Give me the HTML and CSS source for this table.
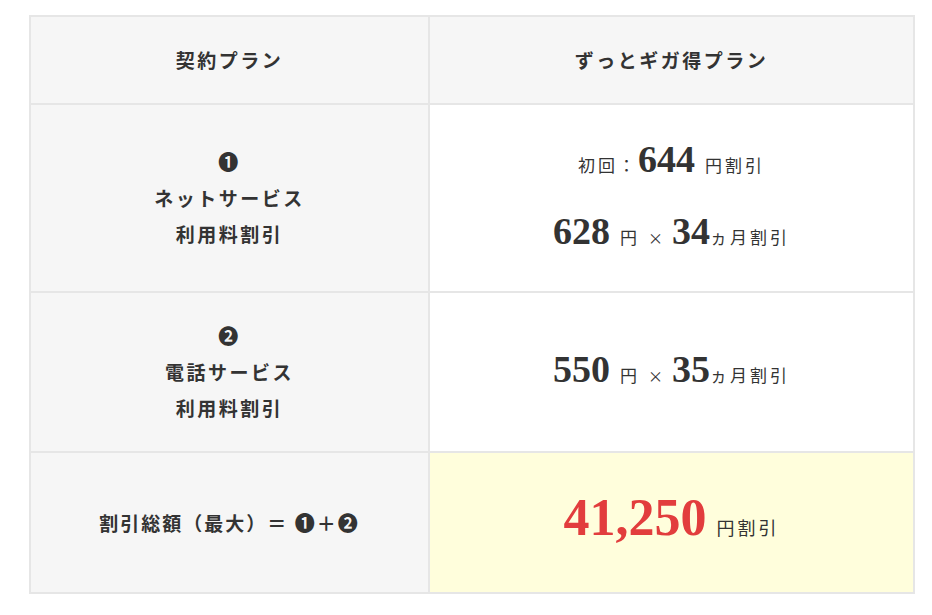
FILE: index.html
```html
<!DOCTYPE html>
<html lang="ja">
<head>
<meta charset="utf-8">
<title>ずっとギガ得プラン</title>
<link rel="stylesheet" href="styles.css">
</head>
<body>
<div class="wrap">
  <table class="plan">
    <tr class="row-head">
      <th class="label">契約プラン</th>
      <th class="label">ずっとギガ得プラン</th>
    </tr>
    <tr class="row-net">
      <th class="label">
        <div class="mark">❶</div>
        <div>ネットサービス</div>
        <div>利用料割引</div>
      </th>
      <td class="val">
        <p class="line"><span class="note">初回：</span><span class="num">644</span><span class="note gap">円割引</span></p>
        <p class="line"><span class="num">628</span><span class="note gap">円</span><span class="times">×</span><span class="num">34</span><span class="note">ヵ月割引</span></p>
      </td>
    </tr>
    <tr class="row-tel">
      <th class="label">
        <div class="mark">❷</div>
        <div>電話サービス</div>
        <div>利用料割引</div>
      </th>
      <td class="val">
        <p class="line"><span class="num">550</span><span class="note gap">円</span><span class="times">×</span><span class="num">35</span><span class="note">ヵ月割引</span></p>
      </td>
    </tr>
    <tr class="row-total">
      <th class="label total-label">割引総額（最大）＝ <span class="mark-inline">❶</span>＋<span class="mark-inline">❷</span></th>
      <td class="val total">
        <p class="line"><span class="num big">41,250</span><span class="note note-lg gap">円割引</span></p>
      </td>
    </tr>
  </table>
</div>
</body>
</html>
```

FILE: styles.css
```css
html, body {
  margin: 0;
  padding: 0;
  background: #ffffff;
}

body {
  font-family: "Noto Sans CJK JP", "Noto Sans", sans-serif;
  color: #333333;
}

.wrap {
  padding: 15px 17px 0 29px;
}

.plan {
  width: 886px;
  border-collapse: collapse;
  border: 2px solid #e6e6e6;
  table-layout: fixed;
}

.plan th,
.plan td {
  border: 2px solid #e6e6e6;
  padding: 0;
  text-align: center;
  vertical-align: middle;
}

.plan th:first-child {
  width: 397px;
}

.label {
  background: #f6f6f6;
  font-size: 19px;
  font-weight: 700;
  letter-spacing: 2.5px;
  line-height: 36px;
  color: #333333;
}

.row-head { height: 88px; }
.row-net { height: 188px; }
.row-tel { height: 160px; }
.row-total { height: 141px; }

.mark {
  font-size: 20px;
  line-height: 36px;
}

.mark-inline {
  font-size: 20px;
}

.val {
  background: #ffffff;
}

.val.total {
  background: #fffedc;
}

.line {
  margin: 0;
  line-height: 66px;
  white-space: nowrap;
}

.num {
  font-family: "Liberation Serif", serif;
  font-weight: 700;
  font-size: 38px;
  color: #333333;
}

.num.big {
  font-size: 52px;
  color: #e23d3d;
}

.note {
  font-size: 17px;
  letter-spacing: 3px;
  font-weight: 400;
}

.note.gap {
  margin-left: 10px;
}

.note-lg {
  font-size: 18px;
}

.times {
  font-size: 15px;
  margin: 0 9px 0 8px;
}

.total-label {
  letter-spacing: 2px;
}
```
